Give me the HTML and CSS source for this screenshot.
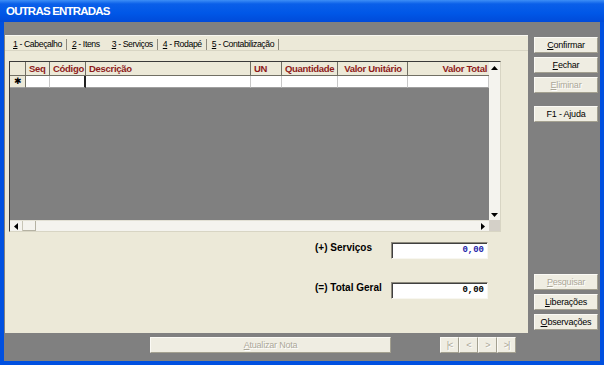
FILE: index.html
```html
<!DOCTYPE html>
<html lang="pt">
  <head>
    <meta charset="UTF-8" />
    <title>Outras Entradas</title>
    <link rel="stylesheet" href="styles.css">
  </head>
  <body>
    <div class="window">
      <div class="title-bar">OUTRAS ENTRADAS</div>

      <div class="client">
        <div class="panel">
          <div class="tabs">
            <div class="tab"><u>1</u> - Cabeçalho</div>
            <div class="tab tab-before-active"><u>2</u> - Itens</div>
            <div class="tab tab-active"><u>3</u> - Serviços</div>
            <div class="tab"><u>4</u> - Rodapé</div>
            <div class="tab"><u>5</u> - Contabilização</div>
          </div>

          <div class="tab-body">
            <div class="grid-box">
              <div class="grid-rows">
                <div class="head indicator"></div>
                <div class="head">Seq</div>
                <div class="head">Código</div>
                <div class="head">Descrição</div>
                <div class="head">UN</div>
                <div class="head">Quantidade</div>
                <div class="head center">Valor Unitário</div>
                <div class="head right">Valor Total</div>

                <div class="cell indicator">&#10033;</div>
                <div class="cell"></div>
                <div class="cell cursor"></div>
                <div class="cell"></div>
                <div class="cell"></div>
                <div class="cell"></div>
                <div class="cell"></div>
                <div class="cell"></div>
              </div>

              <div class="vscroll">
                <div class="arrow">
                  <svg width="7" height="4" viewBox="0 0 7 4"><path d="M0 4 L3.5 0 L7 4 Z" fill="#000"/></svg>
                </div>
                <div class="track"></div>
                <div class="arrow">
                  <svg width="7" height="4" viewBox="0 0 7 4"><path d="M0 0 L3.5 4 L7 0 Z" fill="#000"/></svg>
                </div>
              </div>

              <div class="hscroll">
                <div class="arrow">
                  <svg width="4" height="7" viewBox="0 0 4 7"><path d="M4 0 L0 3.5 L4 7 Z" fill="#000"/></svg>
                </div>
                <div class="thumb"></div>
                <div class="track"></div>
                <div class="arrow">
                  <svg width="4" height="7" viewBox="0 0 4 7"><path d="M0 0 L4 3.5 L0 7 Z" fill="#000"/></svg>
                </div>
              </div>

              <div class="corner"></div>
            </div>

            <div class="totals">
              <div class="total-label">(+) Serviços</div>
              <div class="total-box blue">0,00</div>
              <div class="total-label">(=) Total Geral</div>
              <div class="total-box">0,00</div>
            </div>
          </div>
        </div>

        <div class="side-buttons">
          <button class="btn"><u>C</u>onfirmar</button>
          <button class="btn"><u>F</u>echar</button>
          <button class="btn disabled"><u>E</u>liminar</button>
          <button class="btn help">F1 - Ajuda</button>
          <div class="spacer"></div>
          <button class="btn disabled"><u>P</u>esquisar</button>
          <button class="btn"><u>L</u>iberações</button>
          <button class="btn"><u>O</u>bservações</button>
        </div>

        <div class="bottom-row">
          <button class="btn disabled update"><u>A</u>tualizar Nota</button>
          <div class="nav">
            <button class="btn disabled nav-btn">|&lt;</button>
            <button class="btn disabled nav-btn">&lt;</button>
            <button class="btn disabled nav-btn">&gt;</button>
            <button class="btn disabled nav-btn">&gt;|</button>
          </div>
        </div>
      </div>
    </div>
  </body>
</html>
```

FILE: styles.css
```css
body {
  margin: 0;
  font-family: "Liberation Sans", Arial, sans-serif;
  font-size: 9px;
  color: #000;
}
.window {
  width: 604px;
  height: 365px;
  box-sizing: border-box;
  display: flex;
  flex-direction: column;
  background-color: #0050e0;
  padding: 0 4px 4px 4px;
}
.title-bar {
  height: 22px;
  margin: 0 -4px;
  padding-left: 6px;
  background: linear-gradient(#3d8ef6 0, #0a5fe9 18%, #0057e7 60%, #004ad9 100%);
  color: #fff;
  font-weight: bold;
  font-size: 11.5px;
  letter-spacing: -0.8px;
  line-height: 23px;
}
.client {
  flex: 1;
  background-color: #808080;
  display: grid;
  grid-template-columns: 523px 64px;
  grid-template-rows: 298px 16px;
  column-gap: 6px;
  row-gap: 4px;
  padding: 13px 0 0 1px;
}

/* tab page */
.panel {
  background-color: #ece9d8;
  border-top: 1px solid #f8f7f0;
  box-sizing: border-box;
  display: flex;
  flex-direction: column;
}
.tabs {
  display: flex;
  height: 15px;
  padding: 2px 0 0 3px;
  box-sizing: border-box;
  border-bottom: 1px solid #d8d5c4;
}
.tab {
  padding: 0 4px 0 5px;
  border-right: 1px solid #8d8a7e;
  height: 11px;
  line-height: 11px;
  font-size: 8.7px;
  letter-spacing: -0.4px;
  margin-top: 1px;
}
.tab-before-active {
  border-right: none;
  padding-right: 7px;
}
.tab-active {
  border-left: none;
}
.tab-body {
  padding: 10px 0 0 4px;
}

/* data grid */
.grid-box {
  width: 492px;
  height: 171px;
  box-sizing: border-box;
  border: 1px solid #3a3a3a;
  border-right-color: #d8d5c4;
  border-bottom-color: #d8d5c4;
  display: grid;
  grid-template-columns: 479px 11px;
  grid-template-rows: 1fr 11px;
  background-color: #808080;
}
.grid-rows {
  display: grid;
  grid-template-columns: 16px 24px 36px 165px 31px 56px 70px 81px;
  grid-template-rows: 14px 12px;
  align-content: start;
}
.head {
  background-color: #ece9d8;
  color: #8e1b1b;
  font-weight: bold;
  font-size: 9.5px;
  letter-spacing: -0.3px;
  line-height: 13px;
  padding: 0 2px 0 3px;
  border-right: 1px solid #716f64;
  border-bottom: 1px solid #716f64;
  white-space: nowrap;
  overflow: hidden;
}
.head.center {
  text-align: center;
}
.head.right {
  text-align: right;
  border-right: none;
}
.cell {
  background-color: #fff;
  border-right: 1px solid #c8c8c8;
  border-bottom: 1px solid #a0a0a0;
}
.cell.indicator {
  background-color: #ece9d8;
  border-right: 1px solid #716f64;
  font-size: 9px;
  line-height: 11px;
  text-align: center;
}
.cell.cursor {
  border-right: 2px solid #222;
}
.vscroll {
  display: flex;
  flex-direction: column;
  background-color: #f4f3ee;
}
.vscroll .track,
.hscroll .track {
  flex: 1;
}
.arrow {
  width: 11px;
  height: 11px;
  background-color: #f4f3ee;
  display: flex;
  align-items: center;
  justify-content: center;
}
.hscroll {
  display: flex;
  background-color: #f4f3ee;
  border-top: 1px solid #e2e0d4;
}
.hscroll .arrow {
  width: 12px;
  height: 10px;
  border-right: 1px solid #c8c5b6;
}
.hscroll .arrow:last-child {
  border-right: none;
  border-left: 1px solid #f4f3ee;
}
.thumb {
  width: 12px;
  border-right: 1px solid #b5b2a3;
  border-bottom: 1px solid #b5b2a3;
}
.corner {
  background-color: #d4d0c8;
}

/* totals */
.totals {
  display: grid;
  grid-template-columns: 76px 97px;
  grid-template-rows: 17px 17px;
  row-gap: 23px;
  margin: 10px 0 0 306px;
}
.total-label {
  font-weight: bold;
  font-size: 10px;
  line-height: 12px;
}
.total-box {
  background-color: #fff;
  border: 1px solid;
  border-color: #8e8b7e #f8f7f0 #f8f7f0 #8e8b7e;
  box-shadow: inset 1px 1px 0 #404040;
  font-family: "Liberation Mono", "Courier New", monospace;
  font-weight: bold;
  font-size: 9px;
  line-height: 15px;
  text-align: right;
  padding-right: 3px;
}
.total-box.blue {
  color: #1c1ca8;
}

/* buttons */
.btn {
  display: block;
  margin: 0;
  padding: 0;
  height: 16px;
  background-color: #efede2;
  border: 1px solid;
  border-color: #fbfaf5 #a3a090 #a3a090 #fbfaf5;
  font-family: "Liberation Sans", Arial, sans-serif;
  font-size: 9px;
  letter-spacing: -0.2px;
  color: #000;
  text-align: center;
  line-height: 14px;
}
.btn.disabled {
  color: #aca899;
  text-shadow: 1px 1px 0 #fff;
}
.side-buttons {
  grid-row: 1 / 2;
  grid-column: 2;
  display: flex;
  flex-direction: column;
  gap: 4px;
  padding: 2px 0 3px 0;
}
.side-buttons .btn {
  width: 64px;
}
.side-buttons .help {
  margin-top: 9px;
}
.spacer {
  flex: 1;
}
.bottom-row {
  grid-column: 1;
  grid-row: 2;
  display: flex;
  padding-left: 145px;
}
.update {
  width: 241px;
}
.nav {
  display: flex;
  margin-left: 49px;
}
.nav-btn {
  width: 19px;
  letter-spacing: -1px;
}
```
